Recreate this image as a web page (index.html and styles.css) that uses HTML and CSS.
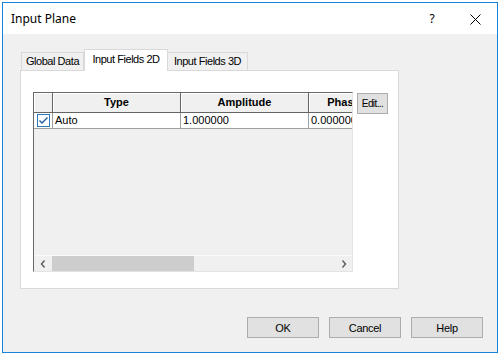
FILE: index.html
```html
<!DOCTYPE html>
<html>
<head>
  <title>Input Plane</title>
  <link rel="stylesheet" href="styles.css">
</head>
<body>
  <div class="window">
    <div class="titlebar">
      <span class="title">Input Plane</span>
      <span class="help-btn">?</span>
      <span class="close-btn">
        <svg width="11" height="11" viewBox="0 0 11 11"><path d="M0.5 0.5 L10.5 10.5 M10.5 0.5 L0.5 10.5" stroke="#000" stroke-width="1"/></svg>
      </span>
    </div>

    <div class="content">
      <div class="tabs">
        <div class="tab tab-global">Global Data</div>
        <div class="tab tab-active">Input Fields 2D</div>
        <div class="tab tab-3d">Input Fields 3D</div>
      </div>

      <div class="panel">
        <div class="grid">
          <div class="grid-row header">
            <div class="hcell col-rh"></div>
            <div class="hcell col">Type</div>
            <div class="hcell col">Amplitude</div>
            <div class="hcell col-phase">Phase</div>
          </div>
          <div class="grid-row">
            <div class="cell col-rh">
              <svg class="check" width="13" height="13" viewBox="0 0 13 13">
                <rect x="0.5" y="0.5" width="12" height="12" fill="#fff" stroke="#2a78c2"/>
                <path d="M2.5 6.5 L5 9 L10.5 3.5" fill="none" stroke="#1c5fa5" stroke-width="1.4"/>
              </svg>
            </div>
            <div class="cell col">Auto</div>
            <div class="cell col">1.000000</div>
            <div class="cell col-phase">0.000000</div>
          </div>
          <div class="grid-fill"></div>
          <div class="hscroll">
            <div class="arrow arrow-left">
              <svg width="6" height="8" viewBox="0 0 6 8"><polyline points="4.5,0.5 1.5,4 4.5,7.5" fill="none" stroke="#606060" stroke-width="1.5"/></svg>
            </div>
            <div class="thumb"></div>
            <div class="track"></div>
            <div class="arrow arrow-right">
              <svg width="6" height="8" viewBox="0 0 6 8"><polyline points="1.5,0.5 4.5,4 1.5,7.5" fill="none" stroke="#606060" stroke-width="1.5"/></svg>
            </div>
          </div>
        </div>
        <button class="edit-btn">Edit...</button>
      </div>

      <div class="footer">
        <button class="btn">OK</button>
        <button class="btn">Cancel</button>
        <button class="btn">Help</button>
      </div>
    </div>
  </div>
</body>
</html>
```

FILE: styles.css
```css
body {
  margin: 0;
  background: #fff;
  font-family: "Liberation Sans", Arial, sans-serif;
  font-size: 11px;
  color: #000;
}

.window {
  margin: 2px;
  width: 496px;
  height: 351px;
  box-sizing: border-box;
  border: 1px solid #1883d7;
  background: #f0f0f0;
  display: flex;
  flex-direction: column;
}

.titlebar {
  height: 31px;
  background: #fff;
  display: flex;
  align-items: center;
}

.title {
  flex: 1;
  padding-left: 8px;
  font-family: "Noto Sans", "Open Sans", sans-serif;
  font-size: 12px;
}

.help-btn {
  width: 44px;
  text-align: center;
  font-family: "Noto Sans", sans-serif;
  font-size: 12px;
}

.close-btn {
  width: 43px;
  display: flex;
  justify-content: center;
  padding-top: 1px;
}

.content {
  flex: 1;
  padding: 15px 14px 0 17px;
}

.tabs {
  display: flex;
  align-items: flex-end;
  height: 21px;
  margin-left: 1px;
}

.tab {
  height: 18px;
  box-sizing: border-box;
  border: 1px solid #d9d9d9;
  border-bottom: none;
  background: #f0f0f0;
  line-height: 17px;
  text-align: center;
  letter-spacing: -0.45px;
}

.tab-global {
  width: 63px;
}

.tab-active {
  width: 84px;
  height: 22px;
  margin-bottom: -1px;
  background: #fff;
  line-height: 18px;
  position: relative;
  z-index: 1;
}

.tab-3d {
  width: 80px;
  border-left: none;
}

.panel {
  width: 379px;
  height: 219px;
  box-sizing: border-box;
  border: 1px solid #d9d9d9;
  background: #fff;
  padding: 21px 0 0 12px;
  display: flex;
  align-items: flex-start;
}

.grid {
  width: 320px;
  height: 180px;
  box-sizing: border-box;
  border-top: 1px solid #696969;
  border-left: 1px solid #696969;
  border-right: 1px solid #e3e3e3;
  border-bottom: 1px solid #e3e3e3;
  background: #f0f0f0;
  display: flex;
  flex-direction: column;
  overflow: hidden;
}

.grid-row {
  display: flex;
  flex: none;
}

.col-rh {
  width: 19px;
}

.col {
  width: 128px;
}

.col-phase {
  width: 70px;
}

.hcell {
  flex: none;
  height: 20px;
  box-sizing: border-box;
  background: #f0f0f0;
  border-right: 1px solid #646464;
  border-bottom: 1px solid #646464;
  box-shadow: inset 1px 1px 0 #fff;
  font-weight: bold;
  text-align: center;
  line-height: 19px;
  white-space: nowrap;
  overflow: hidden;
}

.cell {
  flex: none;
  height: 16px;
  box-sizing: border-box;
  background: #fff;
  border-right: 1px solid #a0a0a0;
  border-bottom: 1px solid #a0a0a0;
  line-height: 15px;
  padding-left: 2px;
  white-space: nowrap;
  overflow: hidden;
}

.cell.col-rh {
  padding-left: 3px;
}

.check {
  display: block;
  margin-top: 1px;
}

.grid-fill {
  flex: 1;
}

.hscroll {
  height: 16px;
  box-sizing: border-box;
  border-top: 1px solid #fafafa;
  display: flex;
  flex: none;
}

.arrow {
  width: 18px;
  display: flex;
  align-items: center;
  justify-content: center;
}

.arrow-right {
  width: 17px;
}

.thumb {
  width: 142px;
  background: #cdcdcd;
}

.track {
  flex: 1;
}

.edit-btn {
  margin: 1px 0 0 4px;
  width: 31px;
  height: 21px;
  padding: 0;
  background: #e1e1e1;
  border: 1px solid #adadad;
  font-family: "Liberation Sans", Arial, sans-serif;
  font-size: 10px;
  letter-spacing: -0.6px;
  color: #000;
}

.footer {
  display: flex;
  justify-content: flex-end;
  gap: 10px;
  margin-top: 28px;
}

.btn {
  width: 72px;
  height: 21px;
  padding: 0;
  background: #e1e1e1;
  border: 1px solid #adadad;
  font-family: "Liberation Sans", Arial, sans-serif;
  font-size: 11px;
  letter-spacing: -0.3px;
  color: #000;
}
```
